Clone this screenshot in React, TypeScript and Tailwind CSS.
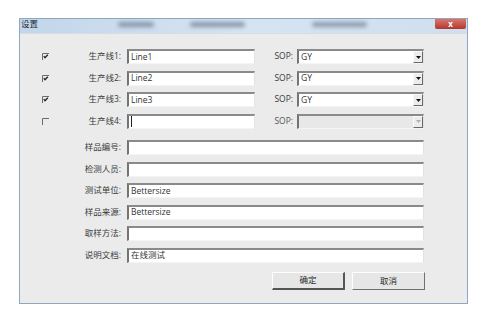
import React from 'react'

const font = { fontFamily: '"Open Sans", "Noto Sans CJK SC", sans-serif' }

function Check({ on }: { on: boolean }) {
  return (
    <svg width="7" height="7" viewBox="0 0 7 7" className="block">
      <path d="M0.5 7V0.5H7" fill="none" stroke="#6b6b6b" strokeWidth="1" />
      {on && <path d="M1.8 3.2L3 4.8L5.8 1.8" fill="none" stroke="#222" strokeWidth="1.3" />}
    </svg>
  )
}

function Field({ value, width, caret }: { value?: string; width: string; caret?: boolean }) {
  return (
    <div
      className={`${width} h-[15px] bg-white border-t-2 border-l-2 border-t-[#8a8a8a] border-l-[#747474] border-r border-b border-r-[#e2e2e2] border-b-[#f4f4f4] flex items-center pl-[2px] text-[8.5px] text-[#333] leading-none`}
    >
      {caret && <span className="w-px h-[11px] bg-[#222]" />}
      {value}
    </div>
  )
}

function Select({ value, disabled }: { value?: string; disabled?: boolean }) {
  return (
    <div
      className={`w-[127px] h-[15px] border-t-2 border-l-2 border-t-[#8a8a8a] border-l-[#747474] border-r border-b border-r-[#e2e2e2] border-b-[#f4f4f4] flex items-center ${disabled ? 'bg-[#e8e8e8]' : 'bg-white'}`}
    >
      <span className="flex-1 pl-[2px] text-[8.5px] text-[#333] leading-none">{value}</span>
      <span className="w-[10px] h-full bg-[#ececec] border-l border-t border-l-[#fafafa] border-t-[#fafafa] border-r border-b border-r-[#6a6a6a] border-b-[#6a6a6a] flex items-center justify-center">
        <svg width="5" height="3" viewBox="0 0 5 3">
          <path d="M0 0H5L2.5 3Z" fill={disabled ? '#b0b0b0' : '#111'} />
        </svg>
      </span>
    </div>
  )
}

function Button({ label, primary }: { label: string; primary?: boolean }) {
  return (
    <div
      className={`w-[73px] h-[18px] bg-[#e6e6e6] flex items-center justify-center text-[8.5px] text-[#2a2a2a] border-t border-l border-t-[#fdfdfd] border-l-[#fdfdfd] ${primary ? 'border-r-2 border-b-2 border-r-[#555] border-b-[#555]' : 'border-r-[1.5px] border-b-[1.5px] border-r-[#707070] border-b-[#707070]'}`}
    >
      {label}
    </div>
  )
}

const lines = [
  { n: 1, on: true, v: 'Line1', sop: 'GY' },
  { n: 2, on: true, v: 'Line2', sop: 'GY' },
  { n: 3, on: true, v: 'Line3', sop: 'GY' },
  { n: 4, on: false, v: '', sop: '' },
]

const fields = [
  { label: '样品编号:', v: '' },
  { label: '检测人员:', v: '' },
  { label: '测试单位:', v: 'Bettersize' },
  { label: '样品来源:', v: 'Bettersize' },
  { label: '取样方法:', v: '' },
  { label: '说明文档:', v: '在线测试' },
]

export default function App() {
  return (
    <div className="w-[484px] h-[320px] bg-white overflow-hidden pt-[18px]" style={font}>
      <div className="ml-[19px] w-[449px] h-[286px] border border-[#8fa8c2] flex flex-col">
        {/* title bar */}
        <div className="h-[14px] flex items-start bg-gradient-to-r from-[#c2d6ea] via-[#d6e4f2] to-[#cfdff0] relative">
          <span className="pl-[1px] pt-[1px] text-[8.5px] leading-none text-[#1e2a38]">设置</span>
          <span className="absolute left-[98px] top-[3px] w-[36px] h-[5px] rounded-full bg-[#8696a8] blur-[2px]" />
          <span className="absolute left-[170px] top-[3px] w-[55px] h-[5px] rounded-full bg-[#8696a8] blur-[2px]" />
          <span className="absolute left-[292px] top-[3px] w-[55px] h-[5px] rounded-full bg-[#8a9aac] blur-[2px]" />
          <div className="ml-auto mr-[1px] w-[31px] h-[10px] bg-gradient-to-b from-[#d8776e] to-[#b4342b] rounded-b-[2px] flex items-center justify-center text-white text-[8px] leading-none font-bold">
            x
          </div>
        </div>

        {/* client */}
        <div className="flex-1 bg-[#ebebeb] border-t border-[#d6dde5] pt-[15px] flex flex-col">
          <div className="flex flex-col gap-[6.5px]">
            {lines.map((l) => (
              <div key={l.n} className="flex items-center h-[15px]">
                <div className="w-[65px] pl-[22px]">
                  <Check on={l.on} />
                </div>
                <span className="w-[36px] text-right text-[8.5px] leading-none text-[#3a3a3a] whitespace-nowrap">
                  生产线{l.n}:
                </span>
                <div className="ml-[6px]">
                  <Field width="w-[128px]" value={l.v} caret={l.n === 4} />
                </div>
                <span className={`w-[38px] text-right text-[8.5px] leading-none ${l.n === 4 ? 'text-[#555]' : 'text-[#3a3a3a]'}`}>
                  SOP:
                </span>
                <div className="ml-[4px]">
                  <Select value={l.sop} disabled={l.n === 4} />
                </div>
              </div>
            ))}
          </div>

          <div className="mt-[11.5px] flex flex-col gap-[6.5px]">
            {fields.map((f) => (
              <div key={f.label} className="flex items-center h-[15px]">
                <span className="w-[101px] text-right text-[8.5px] leading-none text-[#3a3a3a] whitespace-nowrap">
                  {f.label}
                </span>
                <div className="ml-[6px]">
                  <Field width="w-[297px]" value={f.v} />
                </div>
              </div>
            ))}
          </div>

          <div className="mt-[9.5px] pl-[252px] flex gap-[7px]">
            <Button label="确定" primary />
            <Button label="取消" />
          </div>
        </div>
      </div>
    </div>
  )
}
